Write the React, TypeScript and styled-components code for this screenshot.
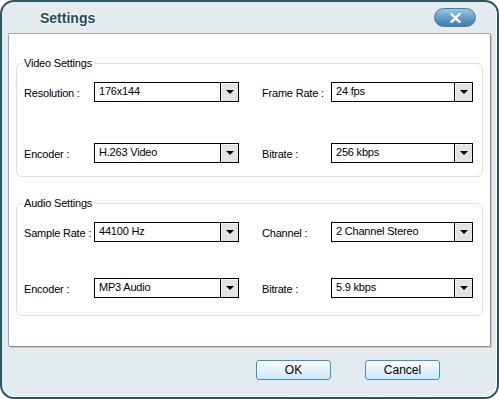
import React from 'react';
import styled, { createGlobalStyle } from 'styled-components';

const GlobalStyle = createGlobalStyle`
    html, body {
        margin: 0;
        padding: 0;
        background: #ffffff;
    }
    body {
        font-family: "Liberation Sans", Arial, sans-serif;
        font-size: 11px;
        color: #000;
    }
`;

const Window = styled.div`
    width: 499px;
    height: 399px;
    box-sizing: border-box;
    display: flex;
    flex-direction: column;
    border: 2px solid #2b5761;
    border-radius: 14px;
    background: #e3ebee;
    box-shadow: inset -1px -1px 0 #ffffff;
    overflow: hidden;
`;

const TitleBar = styled.div`
    height: 31px;
    flex: none;
    display: flex;
    align-items: center;
    justify-content: space-between;
    padding: 0 21px 0 38px;
`;

const Title = styled.div`
    font-size: 14px;
    font-weight: bold;
    color: #1c4d5d;
    text-shadow: 0 0 3px #ffffff, 0 0 2px #ffffff;
`;

const CloseButton = styled.div`
    width: 42px;
    height: 19px;
    box-sizing: border-box;
    display: flex;
    align-items: center;
    justify-content: center;
    border-radius: 10px;
    border: 1px solid #4a7ea3;
    background: linear-gradient(#9cc5de 0%, #6ba3c9 45%, #3f7aa6 100%);
`;

const Panel = styled.div`
    height: 314px;
    flex: none;
    box-sizing: border-box;
    margin: 0 6px;
    padding: 23px 7px 0 7px;
    background: #ffffff;
    border: 1px solid #a8a8a8;
    border-right-color: #8e8e8e;
    border-bottom-color: #8e8e8e;
    border-radius: 2px;
    box-shadow: 1px 1px 0 #c4c4c4;
    display: flex;
    flex-direction: column;
    gap: 20px;
`;

// label | combo | label | combo — the second column holds the gap before the right-hand labels
const Group = styled.fieldset<{ $gap: number; $bottom: number }>`
    margin: 0;
    padding: 12px 0 ${p => p.$bottom}px 7px;
    border: 1px solid #dedede;
    border-radius: 6px;
    display: grid;
    grid-template-columns: 70px 168px 69px 142px;
    justify-items: start;
    row-gap: ${p => p.$gap}px;
    align-items: center;
    letter-spacing: -0.2px;
`;

const Legend = styled.legend`
    margin-left: -1px;
    padding: 0 2px 0 1px;
    line-height: 13px;
    font-size: 11px;
`;

const Label = styled.span`
    white-space: nowrap;
    padding-top: 1px;
`;

const Combo = styled.div<{ $width: number }>`
    width: ${p => p.$width}px;
    height: 20px;
    box-sizing: border-box;
    display: flex;
    border: 1px solid #000000;
    background: #ffffff;
`;

const ComboValue = styled.div`
    flex: 1;
    padding-left: 4px;
    line-height: 17px;
    white-space: nowrap;
    overflow: hidden;
`;

const ComboButton = styled.div`
    width: 17px;
    flex: none;
    display: flex;
    align-items: center;
    justify-content: center;
    background: #e4e4e4;
    border-left: 1px solid #000000;
    box-shadow: inset 1px 1px 0 #f6f6f6;
`;

const Arrow = styled.div`
    width: 0;
    height: 0;
    border-left: 4px solid transparent;
    border-right: 4px solid transparent;
    border-top: 4px solid #000000;
`;

const Footer = styled.div`
    flex: 1;
    display: flex;
    justify-content: flex-end;
    align-items: flex-start;
    padding: 13px 57px 0 0;
    gap: 34px;
`;

const Button = styled.div`
    width: 75px;
    height: 20px;
    box-sizing: border-box;
    display: flex;
    align-items: center;
    justify-content: center;
    border: 1px solid #3f95c2;
    border-radius: 3px;
    background: linear-gradient(#fbfdff 0%, #e6f2fa 50%, #cde6f6 100%);
    font-size: 12px;
`;

const ComboBox = ({ value, width }: { value: string; width: number }) => (
    <Combo $width={width}>
        <ComboValue>{value}</ComboValue>
        <ComboButton><Arrow /></ComboButton>
    </Combo>
);

type Field = [string, string];

const renderGroup = (title: string, fields: Field[], gap: number, bottom: number) => (
    <Group $gap={gap} $bottom={bottom}>
        <Legend>{title}</Legend>
        {fields.map(([label, value], i) => (
            <React.Fragment key={label + value}>
                <Label>{label}</Label>
                <ComboBox value={value} width={i % 2 === 0 ? 145 : 142} />
            </React.Fragment>
        ))}
    </Group>
);

const App = () => {
    const video: Field[] = [
        ['Resolution :', '176x144'],
        ['Frame Rate :', '24 fps'],
        ['Encoder :', 'H.263 Video'],
        ['Bitrate :', '256 kbps'],
    ];
    const audio: Field[] = [
        ['Sample Rate :', '44100 Hz'],
        ['Channel :', '2 Channel Stereo'],
        ['Encoder :', 'MP3 Audio'],
        ['Bitrate :', '5.9 kbps'],
    ];

    return (
        <>
            <GlobalStyle />
            <Window>
                <TitleBar>
                    <Title>Settings</Title>
                    <CloseButton>
                        <svg width="11" height="10" viewBox="0 0 11 10">
                            <path d="M1.5 1 L9.5 9 M9.5 1 L1.5 9" stroke="#ffffff" strokeWidth="2.4" strokeLinecap="square" />
                        </svg>
                    </CloseButton>
                </TitleBar>
                <Panel>
                    {renderGroup('Video Settings', video, 41, 13)}
                    {renderGroup('Audio Settings', audio, 36, 17)}
                </Panel>
                <Footer>
                    <Button>OK</Button>
                    <Button>Cancel</Button>
                </Footer>
            </Window>
        </>
    );
};

export default App;
